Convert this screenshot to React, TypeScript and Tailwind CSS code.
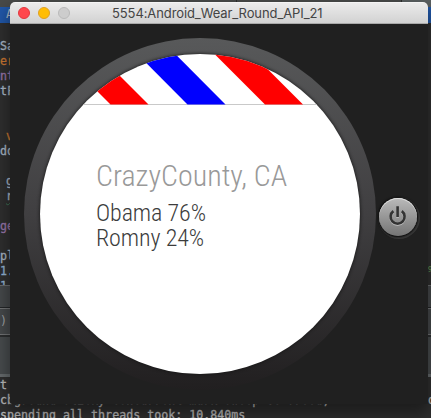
type CodeLine = { text: string; pad?: string; color: string };

const code: CodeLine[] = [
  { text: 'Sa', color: 'text-[#a9b7c6]' },
  { text: 'er', color: 'text-[#cc7832]' },
  { text: 'nt', color: 'text-[#9876aa]' },
  { text: 'tF', color: 'text-[#a9b7c6]' },
  { text: '', color: '' },
  { text: '', color: '' },
  { text: 'v', pad: 'pl-[6px]', color: 'text-[#cc7832]' },
  { text: 'do', color: 'text-[#a9b7c6]' },
  { text: '', color: '' },
  { text: 'g', pad: 'pl-[6px]', color: 'text-[#a9b7c6] underline decoration-wavy decoration-[#3c7355] decoration-1' },
  { text: 'r', pad: 'pl-[6px]', color: 'text-[#a9b7c6] underline decoration-wavy decoration-[#3c7355] decoration-1' },
  { text: '', color: '' },
  { text: 'ge', color: 'text-[#9876aa]' },
  { text: '', color: '' },
  { text: 'pl', color: 'text-[#a9b7c6]' },
  { text: '1.', color: 'text-[#93b4d4]' },
  { text: '1', color: 'text-[#93b4d4]' },
];

function Editor() {
  return (
    <div className="flex h-[418px] w-[431px] flex-col overflow-hidden bg-[#2f2f2f] font-['DejaVu_Sans_Mono',monospace] text-[11.65px] leading-[15px]">
      <div className="flex h-[7px] shrink-0 bg-[#484a49]">
        <div className="w-[41px] border-r border-[#2d2d2d]" />
        <div className="w-[196px] border-r border-[#2d2d2d]" />
        <div className="w-[165px] border-r border-[#2d2d2d]" />
        <div className="flex-1 bg-[#5a6061]" />
      </div>
      <div className="h-4 shrink-0 bg-[#2057a8] pl-[6px] text-[#a9b7c6]">A</div>
      <div className="flex h-[262px] shrink-0 justify-between overflow-hidden pt-4">
        <div>
          {code.map((line, i) => (
            <div key={i} className={`h-[15px] whitespace-pre [-webkit-text-stroke:0.3px_currentColor] ${line.pad ?? ''} ${line.color}`}>
              {line.text}
            </div>
          ))}
        </div>
        <div className="w-[3px] overflow-hidden pt-[225px] text-[#628f51]">%</div>
      </div>
      <div className="h-[23px] shrink-0 border-y border-t-[#6b6d6e] border-b-[#242628] bg-[#46494b]" />
      <div className="h-[27px] shrink-0 border-y border-t-[#727476] border-b-[#727476] bg-[#46494b] pt-[5px] text-[#a0a2a3]">)</div>
      <div className="h-[39px] shrink-0 border-t-2 border-[#2c2e2f] bg-[#484c4e]" />
      <div className="h-[3px] shrink-0 bg-[#666b6d]" />
      <div className="flex flex-1 flex-col bg-[#2f2f2f] pt-px text-[#bbb] [-webkit-text-stroke:0.3px_currentColor]">
        <div className="h-[15px] shrink-0">t</div>
        <div className="flex h-[15px] shrink-0 justify-between whitespace-pre">
          <span>cbground sticky concurrent mark sweep GC freed,</span>
          <span className="w-[3px] overflow-hidden">o</span>
        </div>
        <div className="h-[15px] shrink-0 whitespace-pre">spending all threads took: 10.840ms</div>
      </div>
    </div>
  );
}

function Watch() {
  return (
    <div className="h-[352px] w-[352px] shrink-0 rounded-full bg-linear-to-b from-[#58595a] via-[#403f41] via-50% to-[#211f20] p-4">
      <div className="h-80 w-80 overflow-hidden rounded-full bg-white shadow-[0_0_3px_1px_rgba(20,20,20,0.65)]">
        <svg className="block" width="320" height="51" viewBox="0 0 320 51">
          <path d="M0 50.5H320" stroke="#c9c9c9" strokeWidth="1" />
          <path d="M20 0H58L108.5 50.5H70.5Z" fill="#f00" />
          <path d="M97.3 0H135.3L185.5 50.5H147.5Z" fill="#00f" />
          <path d="M174.5 0H212.5L263 50.5H225Z" fill="#f00" />
        </svg>
        <div className="pl-14 pt-[53px] font-['Roboto_Condensed','Roboto',sans-serif] font-light">
          <div className="mb-[7px] h-9 whitespace-nowrap text-[30px] leading-[36px] text-[#999]">CrazyCounty, CA</div>
          <div className="h-[25px] whitespace-nowrap text-[24px] leading-[25px] tracking-[-0.1px] text-[#3c3c3c]">Obama 76%</div>
          <div className="h-[25px] whitespace-nowrap text-[24px] leading-[25px] tracking-[-0.1px] text-[#3c3c3c]">Romny 24%</div>
        </div>
      </div>
    </div>
  );
}

function PowerButton() {
  return (
    <button className="mt-[160px] ml-[3px] h-[38px] w-[38px] shrink-0 rounded-full bg-linear-to-b from-[#bababa] to-[#757575] shadow-[inset_0_1px_0_#dedede,0_0_2px_1px_#080808,1px_1px_0_2px_#383838]">
      <svg width="38" height="38" viewBox="0 0 38 38" fill="none">
        <g stroke="#b9b9b9" strokeWidth="2.6" transform="translate(0 1)">
          <path d="M14.4 13.1A7 7 0 1 0 22.8 13.1M18.6 8.3V19" />
        </g>
        <path d="M14.4 13.1A7 7 0 1 0 22.8 13.1M18.6 8.3V19" stroke="#333" strokeWidth="2.6" />
      </svg>
    </button>
  );
}

function EmulatorWindow() {
  return (
    <div className="absolute left-[10px] top-[2px] flex h-[402px] w-[418px] flex-col overflow-hidden rounded-t-[5px] rounded-b-[2px] bg-[#202020]">
      <div className="flex h-[22px] shrink-0 items-center border-t border-b border-t-[#f4f4f4] border-b-[#a9a9a9] bg-linear-to-b from-[#ebebeb] to-[#d2d2d2] pl-2">
        <div className="flex gap-2">
          <div className="h-3 w-3 rounded-full border border-[#e2383f] bg-[#ff474d]" />
          <div className="h-3 w-3 rounded-full border border-[#dfa023] bg-[#ffbd05]" />
          <div className="h-3 w-3 rounded-full border border-[#b9b9b9] bg-[#cdcdcd]" />
        </div>
        <div className="ml-[42px] whitespace-nowrap font-['Inter','Liberation_Sans',sans-serif] text-[13px] leading-5 tracking-[-0.1px] text-[#444]">5554:Android_Wear_Round_API_21</div>
      </div>
      <div className="flex flex-1 pl-[14px] pt-[14px]">
        <Watch />
        <PowerButton />
      </div>
    </div>
  );
}

export default function App() {
  return (
    <div className="relative h-[418px] w-[431px] overflow-hidden">
      <Editor />
      <div className="absolute left-[10px] top-[2px] h-[402px] w-[418px] rounded-[5px] shadow-[0_8px_16px_2px_rgba(0,0,0,0.4)]" />
      <EmulatorWindow />
    </div>
  );
}
